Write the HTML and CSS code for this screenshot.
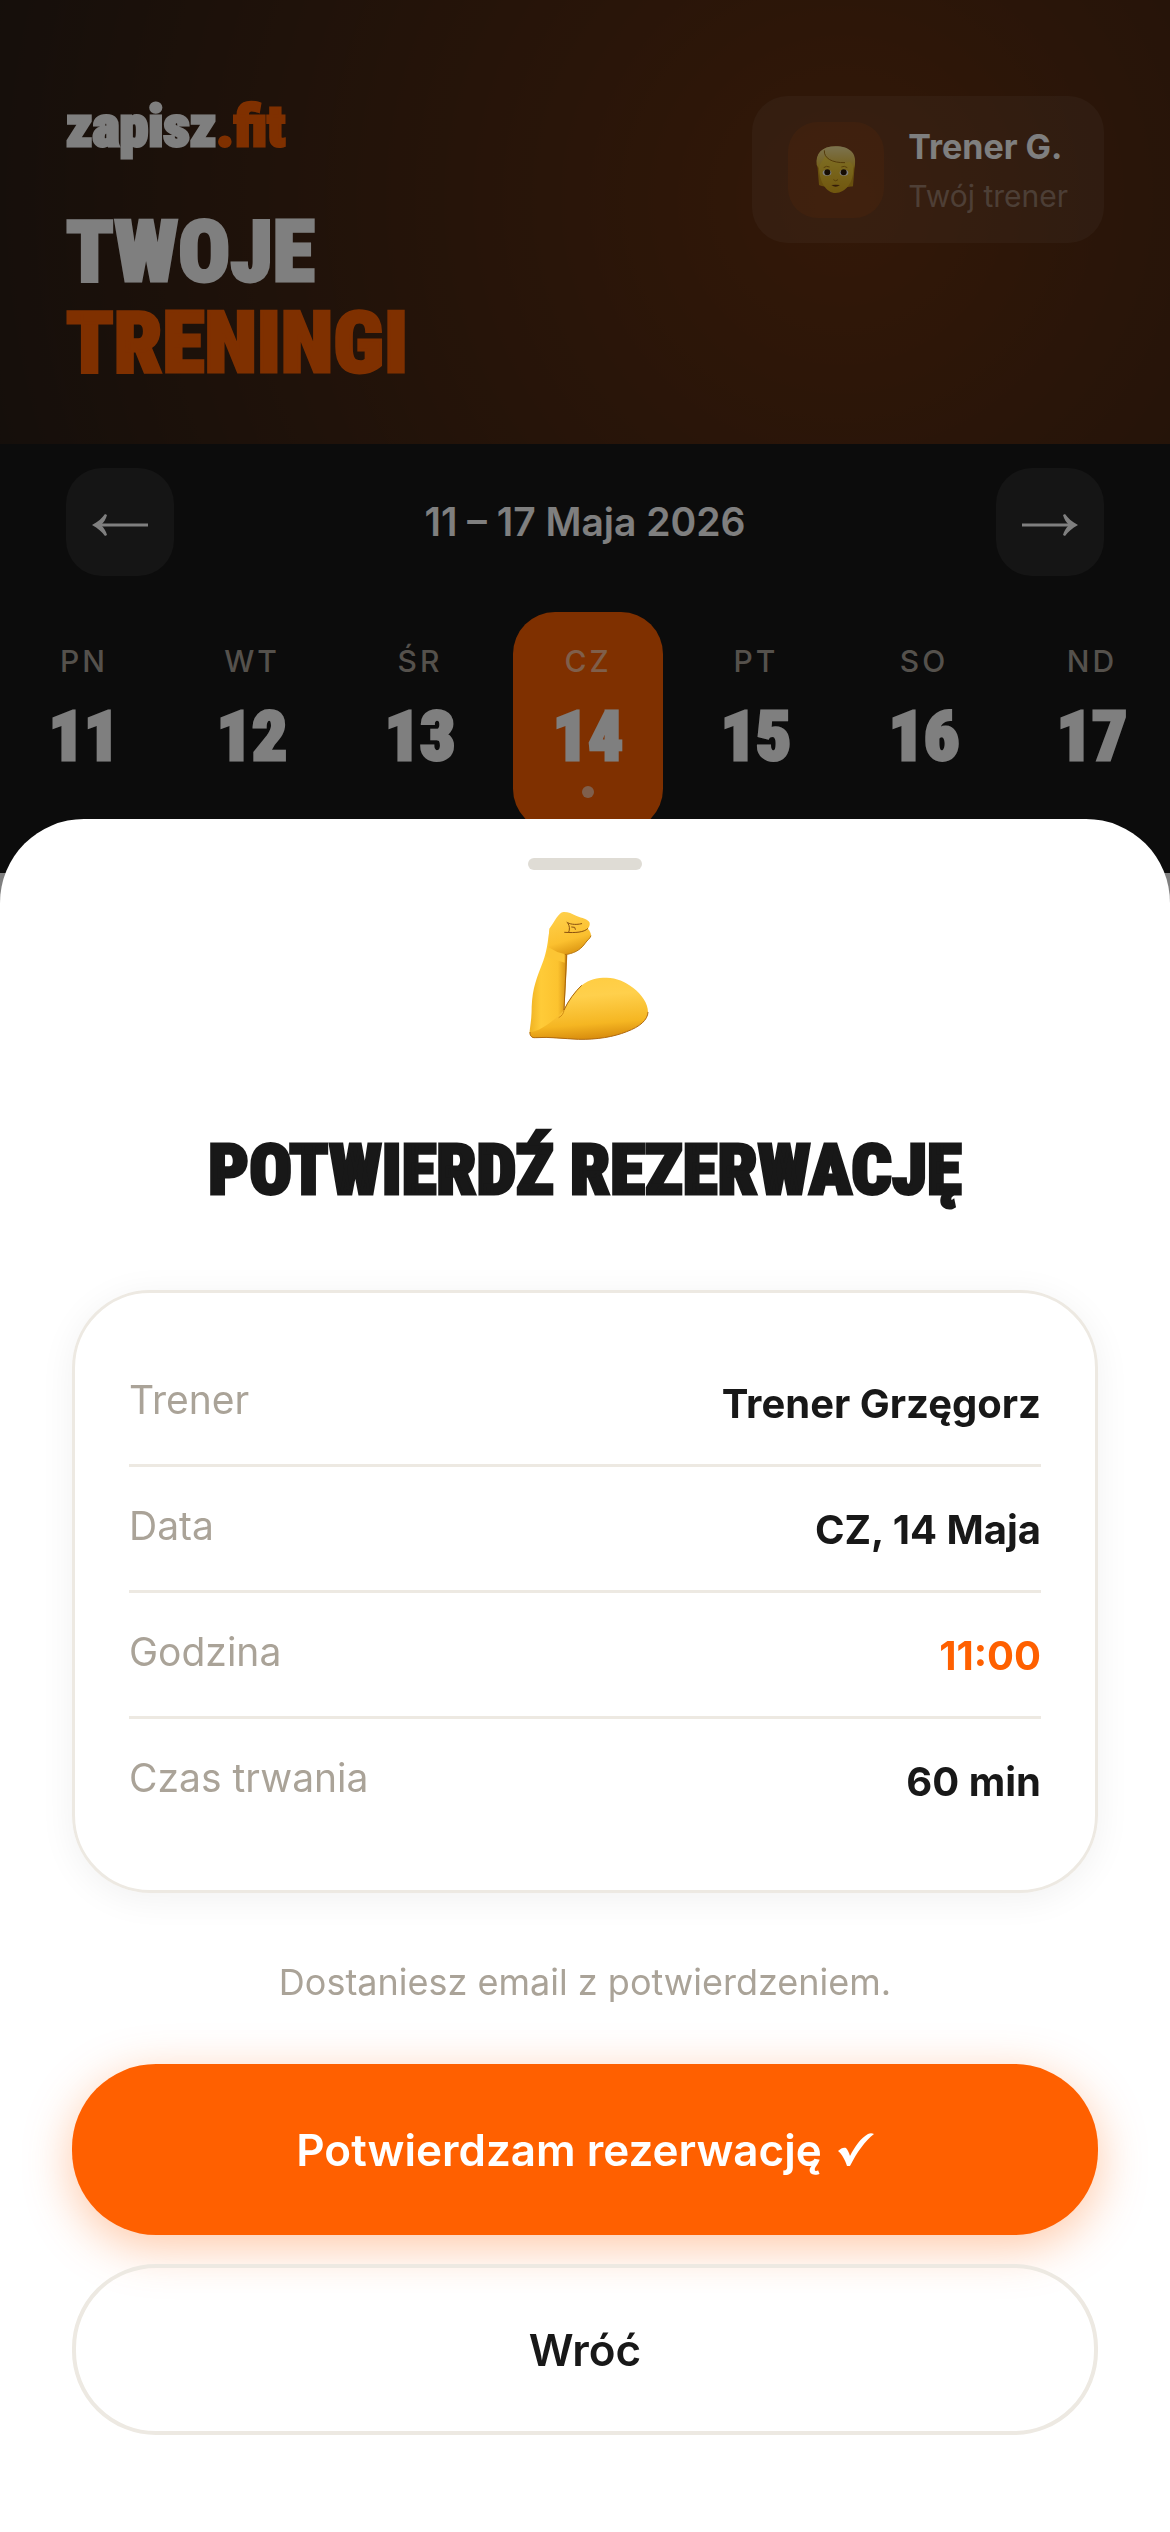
FILE: index.html
```html
<!DOCTYPE html>
<html lang="pl">
<head>
<meta charset="utf-8">
<meta name="viewport" content="width=device-width, initial-scale=1">
<title>zapisz.fit – Twoje treningi</title>
<link rel="stylesheet" href="styles.css">
</head>
<body>
<main class="page">
  <header class="hero">
    <div class="hero-text">
      <div class="logo">zapisz<span class="accent">.fit</span></div>
      <h1 class="hero-title">TWOJE<br><span class="accent">TRENINGI</span></h1>
    </div>
    <div class="trainer">
      <span class="avatar">
        <svg class="face" viewBox="340 250 126 147" aria-hidden="true">
          <defs>
            <linearGradient id="skin" x1="0" y1="0" x2="0" y2="1"><stop offset="0" stop-color="#ffe04a"/><stop offset="1" stop-color="#e0ac1c"/></linearGradient>
            <linearGradient id="hair" x1="0" y1="0" x2="0" y2="1"><stop offset="0" stop-color="#f8e6a0"/><stop offset="1" stop-color="#e8bc2c"/></linearGradient>
          </defs>
          <path d="M348 320C340 285 352 255 402 254C452 255 466 285 458 325L454 374C440 378 364 378 352 370Z" fill="#d19e1c"/>
          <path d="M352 318C350 290 366 274 402 274C440 274 456 290 455 320C456 362 432 394 402 394C374 394 353 360 352 318Z" fill="url(#skin)"/>
          <path d="M345 310C341 276 360 254 402 254C446 254 464 276 460 308L456 322C454 310 450 304 444 300C432 306 390 304 370 282C366 296 356 300 352 320Z" fill="url(#hair)"/>
          <path d="M368 266C366 290 392 304 430 303" fill="none" stroke="#a87412" stroke-width="3"/>
          <path d="M366 318Q374 311 384 316M419 316Q428 311 437 318" fill="none" stroke="#b07e14" stroke-width="3"/>
          <ellipse cx="376" cy="333" rx="13" ry="9" fill="#fff"/><ellipse cx="427" cy="333" rx="13" ry="9" fill="#fff"/>
          <circle cx="377" cy="332" r="9" fill="#2a1805"/><circle cx="426" cy="332" r="9" fill="#2a1805"/>
          <path d="M395 354Q402 361 409 354" fill="none" stroke="#b07e14" stroke-width="3"/>
          <path d="M389 370Q402 368 415 370Q402 381 389 370Z" fill="#6a3a10"/>
        </svg>
      </span>
      <span class="trainer-text">
        <strong class="trainer-name">Trener G.</strong>
        <span class="trainer-role">Twój trener</span>
      </span>
    </div>
  </header>

  <section class="calendar">
    <div class="week-nav">
      <button class="nav-button" type="button" aria-label="Poprzedni tydzień">
        <svg class="arrow" viewBox="0 0 56 24" aria-hidden="true"><path d="M5 12H56" stroke="currentColor" stroke-width="3"/><path d="M0 12C6 9 10 5 13 1L15 2C14 6 12 9 9 12C12 15 14 18 15 22L13 23C10 19 6 15 0 12Z" fill="currentColor"/></svg>
      </button>
      <span class="week-label">11 – 17 Maja 2026</span>
      <button class="nav-button" type="button" aria-label="Następny tydzień">
        <svg class="arrow" viewBox="0 0 56 24" aria-hidden="true"><path d="M0 12H51" stroke="currentColor" stroke-width="3"/><path d="M56 12C50 9 46 5 43 1L41 2C42 6 44 9 47 12C44 15 42 18 41 22L43 23C46 19 50 15 56 12Z" fill="currentColor"/></svg>
      </button>
    </div>
    <div class="days">
      <button class="day" type="button"><span class="day-name">PN</span><span class="day-number">11</span></button>
      <button class="day" type="button"><span class="day-name">WT</span><span class="day-number">12</span></button>
      <button class="day" type="button"><span class="day-name">ŚR</span><span class="day-number">13</span></button>
      <button class="day day-active" type="button"><span class="day-name">CZ</span><span class="day-number">14</span><span class="day-dot"></span></button>
      <button class="day" type="button"><span class="day-name">PT</span><span class="day-number">15</span></button>
      <button class="day" type="button"><span class="day-name">SO</span><span class="day-number">16</span></button>
      <button class="day" type="button"><span class="day-name">ND</span><span class="day-number">17</span></button>
    </div>
  </section>
</main>

<div class="overlay">
  <section class="sheet" role="dialog" aria-modal="true" aria-labelledby="sheet-title">
    <span class="handle"></span>
    <svg class="arm" viewBox="144 210 366 396" aria-hidden="true">
      <defs>
        <linearGradient id="forearm" x1="0" y1="0" x2="1" y2="0"><stop offset="0" stop-color="#f0b323"/><stop offset=".3" stop-color="#ffcb38"/><stop offset=".75" stop-color="#fcc32f"/><stop offset="1" stop-color="#d38e12"/></linearGradient>
        <linearGradient id="biceps" x1=".4" y1="0" x2=".55" y2="1"><stop offset="0" stop-color="#ffcd42"/><stop offset=".3" stop-color="#ffd04c"/><stop offset=".75" stop-color="#f5b622"/><stop offset="1" stop-color="#d78a0c"/></linearGradient>
        <linearGradient id="fist" x1=".3" y1="0" x2=".6" y2="1"><stop offset="0" stop-color="#ffd04c"/><stop offset=".65" stop-color="#fbc02f"/><stop offset="1" stop-color="#d9920f"/></linearGradient>
      </defs>
      <path d="M209 265C203 310 200 335 190 362C170 415 158 440 155 500C155 540 150 560 149 576C149 588 156 594 166 594L262 560L253 510C257 450 260 390 262 343L230 280Z" fill="url(#forearm)"/>
      <path d="M252 510C265 480 285 455 305 436C330 417 350 413 380 413C410 414 435 424 460 444C485 464 504 490 504 516C503 540 480 560 440 575C400 591 350 599 295 598C250 596 210 591 166 594C156 594 149 588 150 576C175 575 215 550 252 510Z" fill="url(#biceps)"/>
      <path d="M250 216C262 215 275 220 290 228C305 234 325 238 329 248C330 256 327 262 323 266C329 270 333 280 333 287C330 296 322 300 316 309C304 326 290 337 262 343C240 344 215 340 206 330C207 305 205 285 209 265C225 242 236 218 250 216Z" fill="url(#fist)"/>
      <path d="M230 340C242 344 252 344 262 343C290 337 304 326 316 309C322 300 330 296 333 287" fill="none" stroke="#b9760c" stroke-width="3"/>
      <path d="M206 322L198 350L254 368L254 342L232 336Z" fill="#fcc534"/>
      <path d="M261 247C268 252 284 256 305 251M264 250C269 258 270 268 266 277M275 261L284 262L286 268M323 266C312 277 288 279 254 277" fill="none" stroke="#8a5110" stroke-width="3" stroke-linecap="round"/>
      <path d="M259 345C258 400 254 460 252 510C265 482 285 455 305 436" fill="none" stroke="#a8650c" stroke-width="3"/>
      <path d="M252 510C251 520 246 528 236 533" fill="none" stroke="#d18d14" stroke-width="3"/>
      <path d="M150 576C149 588 156 594 166 593C210 590 250 596 295 598C350 599 400 591 440 575C480 560 503 540 504 516" fill="none" stroke="#b06a10" stroke-width="3"/>
    </svg>
    <h2 class="sheet-title" id="sheet-title">POTWIERDŹ REZERWACJĘ</h2>
    <dl class="details">
      <div class="row"><dt>Trener</dt><dd>Trener Grzęgorz</dd></div>
      <div class="row"><dt>Data</dt><dd>CZ, 14 Maja</dd></div>
      <div class="row"><dt>Godzina</dt><dd class="accent">11:00</dd></div>
      <div class="row"><dt>Czas trwania</dt><dd>60 min</dd></div>
    </dl>
    <p class="note">Dostaniesz email z potwierdzeniem.</p>
    <button class="button button-primary" type="button">Potwierdzam rezerwację
      <svg class="check" viewBox="0 0 36 34" aria-hidden="true"><path d="M0 18C3 15 6 14 8 15C10 17 11 20 12 23C17 13 23 5 30 1C32 0 34 0 36 1C27 8 19 19 12 33L9 33C7 27 4 21 0 18Z" fill="currentColor"/></svg>
    </button>
    <button class="button button-secondary" type="button">Wróć</button>
  </section>
</div>
</body>
</html>
```
FILE: styles.css
```css
:root {
  --orange: #ff6000;
  --ink: #181818;
  --muted: #aaa398;
  --line: #ede9e2;
  --sans: Inter, "Liberation Sans", sans-serif;
  --display: "Roboto Condensed", "Liberation Sans Narrow", Roboto, sans-serif;
}

* {
  box-sizing: border-box;
}

body {
  margin: 0;
  min-height: 100vh;
  background: #fff;
  color: var(--ink);
  font-family: var(--sans);
}

button {
  margin: 0;
  padding: 0;
  border: 0;
  background: none;
  color: inherit;
  font: inherit;
}

.accent {
  color: var(--orange);
}

/* Extra weight for the heavy display face */
.logo,
.hero-title,
.day-number,
.sheet-title {
  -webkit-text-stroke: 3px currentColor;
}

/* Header */

.hero {
  display: flex;
  justify-content: space-between;
  align-items: flex-start;
  padding: 96px 66px 56px;
  background:
    radial-gradient(circle 1150px at 72% 200px, rgba(255, 96, 0, .34), rgba(255, 96, 0, 0)),
    var(--ink);
  color: #fff;
}

.logo {
  margin-bottom: 50px;
  font: 900 58px/60px var(--display);
}

.hero-title {
  margin: 0;
  font: 900 86px/91px var(--display);
}

.trainer {
  display: flex;
  align-items: center;
  gap: 24px;
  padding: 24px 36px;
  border-radius: 36px;
  background: rgba(255, 255, 255, .07);
}

.avatar {
  display: flex;
  align-items: center;
  justify-content: center;
  width: 96px;
  height: 96px;
  border-radius: 30px;
  background: rgba(255, 96, 0, .12);
}

.face {
  width: 42px;
  height: 49px;
}

.trainer-text {
  display: flex;
  flex-direction: column;
}

.trainer-name {
  font-size: 34px;
  line-height: 54px;
}

.trainer-role {
  color: rgba(255, 255, 255, .35);
  font-size: 30px;
  line-height: 45px;
}

/* Week calendar */

.calendar {
  padding: 24px 0 42px;
  background: var(--ink);
  color: #fff;
}

.week-nav {
  display: flex;
  align-items: center;
  justify-content: space-between;
  padding: 0 66px;
}

.nav-button {
  display: flex;
  align-items: center;
  justify-content: center;
  width: 108px;
  height: 108px;
  border-radius: 36px;
  background: #2a2a2a;
}

.arrow {
  width: 56px;
  height: 24px;
  margin-top: 6px;
}

.week-label {
  font-size: 39px;
  font-weight: 600;
  line-height: 48px;
}

.days {
  display: grid;
  grid-template-columns: repeat(7, 1fr);
  gap: 18px;
  margin-top: 36px;
  padding: 0 3px 0 9px;
}

.day {
  display: flex;
  flex-direction: column;
  align-items: center;
  height: 219px;
  padding-top: 30px;
  border-radius: 42px;
}

.day-active {
  background: var(--orange);
}

.day-name {
  color: var(--muted);
  font-size: 30px;
  font-weight: 500;
  line-height: 39px;
  letter-spacing: 3px;
}

.day-active .day-name {
  color: rgba(255, 255, 255, .6);
}

.day-number {
  margin-top: 17px;
  font: 900 69px/78px var(--display);
}

.day-dot {
  width: 12px;
  height: 12px;
  margin-top: 10px;
  border-radius: 50%;
  background: rgba(255, 255, 255, .6);
}

/* Confirmation sheet */

.overlay {
  position: fixed;
  inset: 0;
  display: flex;
  flex-direction: column;
  justify-content: flex-end;
  background: rgba(0, 0, 0, .5);
}

.sheet {
  display: flex;
  flex-direction: column;
  align-items: center;
  padding: 39px 72px 97px;
  border-radius: 84px 84px 0 0;
  background: #fff;
}

.handle {
  width: 114px;
  height: 12px;
  border-radius: 6px;
  background: #dfdcd5;
}

.arm {
  width: 122px;
  height: 132px;
  margin: 40px 0 0 8px;
}

.sheet-title {
  margin: 82px 0 74px;
  font: 900 71px/92px var(--display);
  text-align: center;
}

.details {
  align-self: stretch;
  margin: 0;
  padding: 48px 54px;
  border: 3px solid var(--line);
  border-radius: 78px;
  box-shadow: 0 6px 36px rgba(0, 0, 0, .06);
}

.row {
  display: flex;
  justify-content: space-between;
  padding: 36px 0 33px;
}

.row + .row {
  border-top: 3px solid var(--line);
}

.row dt {
  color: var(--muted);
  font-size: 39px;
  line-height: 45px;
}

.row dd {
  margin: 0;
  font-size: 40px;
  font-weight: 700;
  line-height: 54px;
}

.note {
  margin: 62px 0 55px;
  color: var(--muted);
  font-size: 36px;
  line-height: 54px;
}

.button {
  display: flex;
  align-items: center;
  justify-content: center;
  gap: 16px;
  align-self: stretch;
  height: 171px;
  border-radius: 84px;
  font-size: 44px;
  font-weight: 600;
  line-height: 54px;
}

.button-primary {
  margin-bottom: 29px;
  background: var(--orange);
  box-shadow: 0 12px 48px rgba(255, 96, 0, .35);
  color: #fff;
}

.button-secondary {
  border: 4px solid var(--line);
}

.check {
  width: 36px;
  height: 34px;
}
```
